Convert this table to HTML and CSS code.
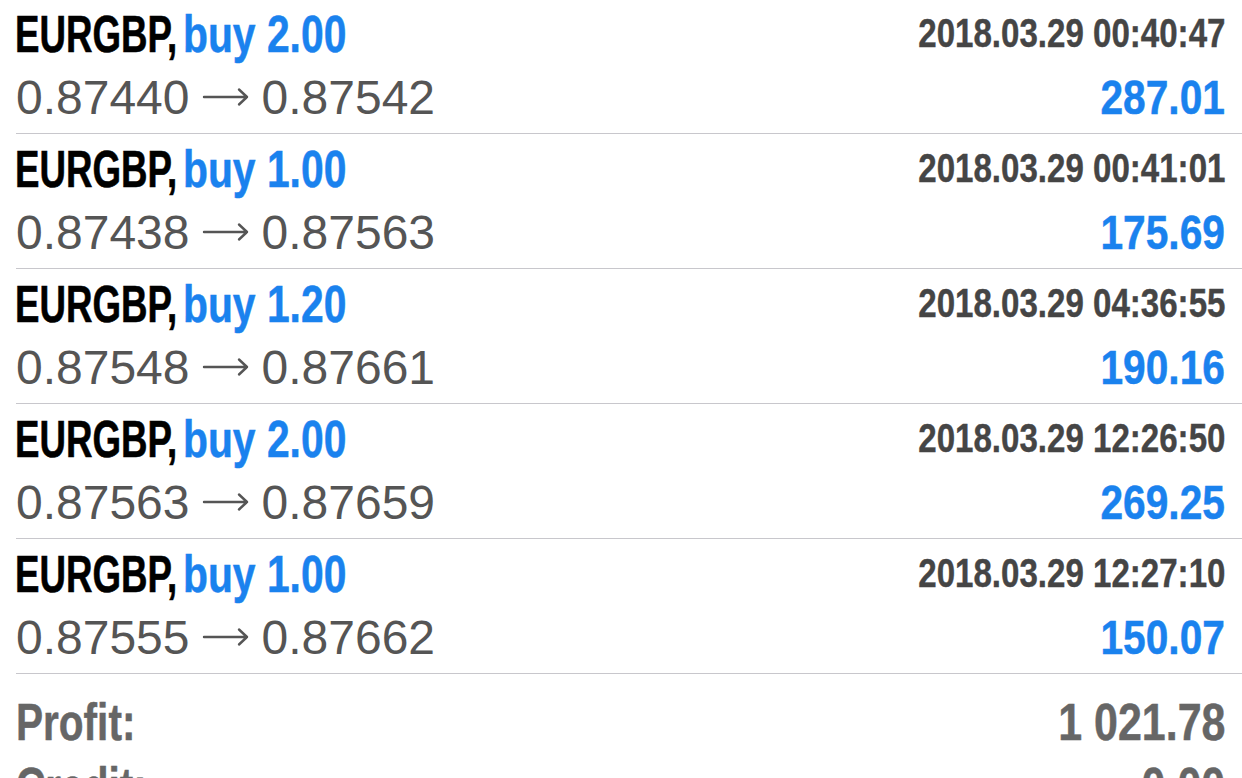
FILE: index.html
```html
<!DOCTYPE html>
<html lang="en">
<head>
<meta charset="utf-8">
<title>History</title>
<link rel="stylesheet" href="styles.css">
</head>
<body>
<ul class="deals">
  <li class="deal">
    <div class="deal-top">
      <span class="deal-title"><span class="sym">EURGBP,</span><span class="type">buy 2.00</span></span>
      <span class="deal-time">2018.03.29 00:40:47</span>
    </div>
    <div class="deal-bottom">
      <span class="deal-prices">0.87440<svg class="arrow" viewBox="0 0 48 20" width="48" height="20" aria-hidden="true"><path d="M2 10H45M37 2.5L45 10L37 17.5"/></svg>0.87542</span>
      <span class="deal-profit">287.01</span>
    </div>
  </li>
  <li class="deal">
    <div class="deal-top">
      <span class="deal-title"><span class="sym">EURGBP,</span><span class="type">buy 1.00</span></span>
      <span class="deal-time">2018.03.29 00:41:01</span>
    </div>
    <div class="deal-bottom">
      <span class="deal-prices">0.87438<svg class="arrow" viewBox="0 0 48 20" width="48" height="20" aria-hidden="true"><path d="M2 10H45M37 2.5L45 10L37 17.5"/></svg>0.87563</span>
      <span class="deal-profit">175.69</span>
    </div>
  </li>
  <li class="deal">
    <div class="deal-top">
      <span class="deal-title"><span class="sym">EURGBP,</span><span class="type">buy 1.20</span></span>
      <span class="deal-time">2018.03.29 04:36:55</span>
    </div>
    <div class="deal-bottom">
      <span class="deal-prices">0.87548<svg class="arrow" viewBox="0 0 48 20" width="48" height="20" aria-hidden="true"><path d="M2 10H45M37 2.5L45 10L37 17.5"/></svg>0.87661</span>
      <span class="deal-profit">190.16</span>
    </div>
  </li>
  <li class="deal">
    <div class="deal-top">
      <span class="deal-title"><span class="sym">EURGBP,</span><span class="type">buy 2.00</span></span>
      <span class="deal-time">2018.03.29 12:26:50</span>
    </div>
    <div class="deal-bottom">
      <span class="deal-prices">0.87563<svg class="arrow" viewBox="0 0 48 20" width="48" height="20" aria-hidden="true"><path d="M2 10H45M37 2.5L45 10L37 17.5"/></svg>0.87659</span>
      <span class="deal-profit">269.25</span>
    </div>
  </li>
  <li class="deal">
    <div class="deal-top">
      <span class="deal-title"><span class="sym">EURGBP,</span><span class="type">buy 1.00</span></span>
      <span class="deal-time">2018.03.29 12:27:10</span>
    </div>
    <div class="deal-bottom">
      <span class="deal-prices">0.87555<svg class="arrow" viewBox="0 0 48 20" width="48" height="20" aria-hidden="true"><path d="M2 10H45M37 2.5L45 10L37 17.5"/></svg>0.87662</span>
      <span class="deal-profit">150.07</span>
    </div>
  </li>
</ul>
<div class="summary">
  <div class="summary-row"><span class="summary-label">Profit:</span><span class="summary-value">1 021.78</span></div>
  <div class="summary-row"><span class="summary-label">Credit:</span><span class="summary-value">0.00</span></div>
</div>
</body>
</html>
```
FILE: styles.css
```css
html, body {
  margin: 0;
  padding: 0;
  background: #ffffff;
}
body {
  width: 1242px;
  height: 778px;
  overflow: hidden;
  font-family: "Liberation Sans", Arial, sans-serif;
}
.deals {
  list-style: none;
  margin: -1px 0 0 0;
  padding: 0;
}
.deal {
  margin-left: 16px;
  padding: 5px 17px 8px 0;
  border-bottom: 1px solid #c8c7cc;
}
.deal-top {
  display: flex;
  justify-content: space-between;
  align-items: center;
  height: 60px;
}
.deal-title {
  font-weight: 700;
  font-size: 52px;
  line-height: 60px;
  white-space: nowrap;
  margin-left: -1px;
}
.sym {
  display: inline-block;
  color: #000000;
  -webkit-text-stroke: 0.6px #000000;
  transform: scaleX(0.705);
  transform-origin: 0 50%;
  margin-right: -62px;
}
.type {
  display: inline-block;
  color: #1a82ee;
  -webkit-text-stroke: 0.5px #1a82ee;
  transform: scaleX(0.785);
  transform-origin: 0 50%;
}
.deal-time {
  display: inline-block;
  font-weight: 700;
  font-size: 40px;
  line-height: 44px;
  padding-bottom: 2px;
  color: #454545;
  -webkit-text-stroke: 0.4px #454545;
  white-space: nowrap;
  transform: scaleX(0.827);
  transform-origin: 100% 50%;
}
.deal-bottom {
  display: flex;
  justify-content: space-between;
  align-items: baseline;
  margin-top: 5px;
  height: 56px;
}
.deal-prices {
  font-size: 48px;
  line-height: 56px;
  color: #555555;
  white-space: nowrap;
}
.arrow {
  display: inline-block;
  width: 48px;
  height: 20px;
  margin: 0 12px;
  vertical-align: 7px;
  fill: none;
  stroke: #555555;
  stroke-width: 2.4;
  stroke-linecap: round;
  stroke-linejoin: round;
}
.deal-profit {
  display: inline-block;
  font-weight: 700;
  font-size: 49px;
  line-height: 56px;
  color: #1a82ee;
  -webkit-text-stroke: 0.5px #1a82ee;
  transform: scaleX(0.83);
  transform-origin: 100% 50%;
}
.summary {
  padding: 16px 17px 0 16px;
}
.summary-row {
  display: flex;
  justify-content: space-between;
  align-items: baseline;
  height: 64px;
  font-weight: 700;
  font-size: 52px;
  line-height: 64px;
  color: #666666;
  -webkit-text-stroke: 0.5px #666666;
}
.summary-label {
  display: inline-block;
  transform: scaleX(0.78);
  transform-origin: 0 50%;
}
.summary-value {
  display: inline-block;
  transform: scaleX(0.826);
  transform-origin: 100% 50%;
}
```
